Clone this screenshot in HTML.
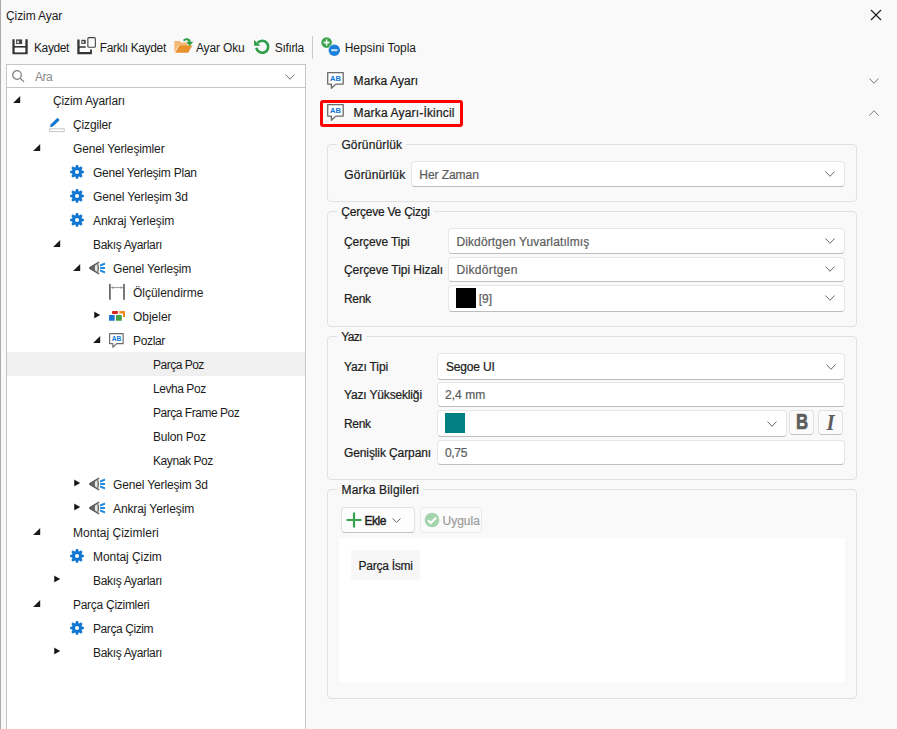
<!DOCTYPE html>
<html lang="tr"><head><meta charset="utf-8"><title>Çizim Ayar</title>
<style>
html,body{margin:0;padding:0}
body{width:897px;height:729px;position:relative;overflow:hidden;background:#f9f9f9;font-family:"Liberation Sans",sans-serif;font-size:12px;color:#1c1c1c}
.abs{position:absolute;display:block}
.t{position:absolute;white-space:nowrap;line-height:16px;height:16px}
.s{-webkit-text-stroke:0.22px currentColor}
.b{-webkit-text-stroke:0.4px currentColor}
.sel{position:absolute;left:7px;width:298px;height:24px;background:#f0f0f0}
.grp{position:absolute;border:1px solid #e1e1e1;border-radius:4px;box-sizing:border-box;background:#f9f9f9}
.gt{position:absolute;background:#f9f9f9;height:14px}
.cb{position:absolute;box-sizing:border-box;background:#fff;border:1px solid #e6e6e6;border-bottom-color:#bdbdbd;border-radius:4px}
.btn{position:absolute;box-sizing:border-box;background:#fdfdfd;border:1px solid #e0e0e0;border-bottom-color:#c4c4c4;border-radius:4px}
</style></head>
<body>
<div class="abs" style="left:0;top:0;width:1px;height:729px;background:#ababab"></div>
<svg class="abs" style="left:870px;top:9px" width="12" height="12" viewBox="0 0 12 12"><path d="M1 1l10 10M11 1L1 11" stroke="#1a1a1a" stroke-width="1.1"/></svg>
<svg class="abs" style="left:12px;top:39px" width="16" height="16" viewBox="0 0 16 16"><rect x="0" y="0" width="16" height="15.6" fill="#fff" opacity=".7"/><path d="M0.4 0.3h2.4v6.7h10.4V0.3h2.5v14.9H0.4zM2.8 8.8v4.4h10.4V8.8z" fill="#333" fill-rule="evenodd"/><rect x="2.8" y="8.8" width="10.4" height="4.4" fill="#fff"/><rect x="2.8" y="0.3" width="10.4" height="6.7" fill="#fff"/><rect x="4.1" y="0.4" width="6.1" height="4.7" fill="#444"/><rect x="5.1" y="1.8" width="1.9" height="2.4" fill="#ddd"/></svg>
<svg class="abs" style="left:77px;top:37px" width="20" height="18" viewBox="0 0 20 18"><rect x="0" y="2.2" width="15.3" height="15.3" fill="#fff" opacity=".7"/><path d="M0.3 2.6h2.3v6.6h6.1v1.5H2.6v4.4h10.5v-2.6h1.8v4.7H0.3z" fill="#333"/><rect x="4.3" y="2.8" width="4.4" height="4.1" fill="#444"/><rect x="5.2" y="4.1" width="1.7" height="1.9" fill="#ddd"/><rect x="10.85" y="0.65" width="7.5" height="9.6" rx="1" fill="#fbfbfb" stroke="#444" stroke-width="1.1"/></svg>
<svg class="abs" style="left:174px;top:37px" width="20" height="17" viewBox="0 0 20 17"><path d="M0.3 4h5.6l1.4 1.6h6.3V15H0.3z" fill="#f2b876"/><path d="M5 8.3l-4.2 7.3" stroke="#fdf3e6" stroke-width="1"/><path d="M5.4 8.4h13l-4.3 7.3H1.2z" fill="#e8912d"/><path d="M9.6 3.6C11.6 1.4 15.6 1.8 15.7 5.4" fill="none" stroke="#2e9e48" stroke-width="2"/><path d="M12.3 4.8h6.9l-3.5 4.1z" fill="#2e9e48"/></svg>
<svg class="abs" style="left:254px;top:39px" width="17" height="16" viewBox="0 0 17 16"><path d="M3.6 3.9A6 6 0 1 1 2.3 8.7" fill="none" stroke="#2e9e48" stroke-width="2.6"/><path d="M0.1 0.9v5.8h6.4z" fill="#2e9e48"/></svg>
<div class="abs" style="left:312px;top:36px;width:1px;height:23px;background:#c9c9c9"></div>
<svg class="abs" style="left:321px;top:37px" width="20" height="20" viewBox="0 0 20 20"><circle cx="5.6" cy="5.6" r="5.3" fill="#3da44d"/><path d="M2.6 5.6h6M5.6 2.6v6" stroke="#fff" stroke-width="1.5"/><circle cx="13.3" cy="13.2" r="6.2" fill="#f9f9f9"/><circle cx="13.3" cy="13.2" r="5.7" fill="#1b7fdc"/><path d="M10.2 13.2h6.2" stroke="#d8e9fb" stroke-width="1.9"/></svg>
<div class="abs" style="left:6px;top:64px;width:300px;height:680px;box-sizing:border-box;border:1px solid #c6c6c6;background:#fff"></div>
<div class="abs" style="left:6px;top:87px;width:300px;height:1px;background:#c6c6c6"></div>
<svg class="abs" style="left:12px;top:70px" width="13" height="13" viewBox="0 0 13 13"><circle cx="5" cy="5" r="4.3" fill="none" stroke="#7c7c7c" stroke-width="1.2"/><path d="M8.2 8.2l3.8 3.7" stroke="#7c7c7c" stroke-width="1.2"/></svg>
<svg class="abs" style="left:285px;top:74px" width="10" height="6" viewBox="0 0 10 6"><path d="M0.5 0.5L5.0 5.3L9.5 0.5" fill="none" stroke="#6e6e6e" stroke-width="1"/></svg>
<svg class="abs" style="left:13px;top:96px" width="8" height="8" viewBox="0 0 8 8"><path d="M7.2 0V7.1H0.1Z" fill="#1a1a1a"/></svg>
<svg class="abs" style="left:49px;top:117px;overflow:visible" width="16" height="16" viewBox="0 0 16 16"><g><rect x="0.6" y="11.8" width="14.6" height="2.8" fill="#fff" stroke="#c6c6c6"/><path d="M0.9 10.3l0.9-3.1 6.2-6q.5-.4 1 0l1.2 1.2q.4.5 0 1l-6.2 6z" fill="#1276d3"/></g></svg>
<svg class="abs" style="left:33px;top:144px" width="8" height="8" viewBox="0 0 8 8"><path d="M7.2 0V7.1H0.1Z" fill="#1a1a1a"/></svg>
<svg class="abs" style="left:69px;top:165px;overflow:visible" width="16" height="16" viewBox="0 0 16 16"><g transform="translate(0,-0.5)"><path fill="#1276d3" d="M6.9 0.6h2.2l.35 1.9 1.05.43 1.6-1.1 1.55 1.55-1.1 1.6.43 1.05 1.9.35v2.2l-1.9.35-.43 1.05 1.1 1.6-1.55 1.55-1.6-1.1-1.05.43-.35 1.9H6.9l-.35-1.9-1.05-.43-1.6 1.1-1.55-1.55 1.1-1.6-.43-1.05-1.9-.35V6.4l1.9-.35.43-1.05-1.1-1.6L3.9 1.85l1.6 1.1 1.05-.43z"/><circle cx="8" cy="7.5" r="2" fill="#fff"/></g></svg>
<svg class="abs" style="left:69px;top:189px;overflow:visible" width="16" height="16" viewBox="0 0 16 16"><g transform="translate(0,-0.5)"><path fill="#1276d3" d="M6.9 0.6h2.2l.35 1.9 1.05.43 1.6-1.1 1.55 1.55-1.1 1.6.43 1.05 1.9.35v2.2l-1.9.35-.43 1.05 1.1 1.6-1.55 1.55-1.6-1.1-1.05.43-.35 1.9H6.9l-.35-1.9-1.05-.43-1.6 1.1-1.55-1.55 1.1-1.6-.43-1.05-1.9-.35V6.4l1.9-.35.43-1.05-1.1-1.6L3.9 1.85l1.6 1.1 1.05-.43z"/><circle cx="8" cy="7.5" r="2" fill="#fff"/></g></svg>
<svg class="abs" style="left:69px;top:213px;overflow:visible" width="16" height="16" viewBox="0 0 16 16"><g transform="translate(0,-0.5)"><path fill="#1276d3" d="M6.9 0.6h2.2l.35 1.9 1.05.43 1.6-1.1 1.55 1.55-1.1 1.6.43 1.05 1.9.35v2.2l-1.9.35-.43 1.05 1.1 1.6-1.55 1.55-1.6-1.1-1.05.43-.35 1.9H6.9l-.35-1.9-1.05-.43-1.6 1.1-1.55-1.55 1.1-1.6-.43-1.05-1.9-.35V6.4l1.9-.35.43-1.05-1.1-1.6L3.9 1.85l1.6 1.1 1.05-.43z"/><circle cx="8" cy="7.5" r="2" fill="#fff"/></g></svg>
<svg class="abs" style="left:53px;top:240px" width="8" height="8" viewBox="0 0 8 8"><path d="M7.2 0V7.1H0.1Z" fill="#1a1a1a"/></svg>
<svg class="abs" style="left:73px;top:264px" width="8" height="8" viewBox="0 0 8 8"><path d="M7.2 0V7.1H0.1Z" fill="#1a1a1a"/></svg>
<svg class="abs" style="left:89px;top:261px;overflow:visible" width="16" height="16" viewBox="0 0 16 16"><g><path d="M0.4 7L6.2 3.5V10.5Z" fill="#666"/><ellipse cx="7.5" cy="7" rx="1.6" ry="3.3" fill="#e6e6e6"/><path d="M8.7 3.2Q10.2 7 8.7 10.8" fill="none" stroke="#5c5c5c" stroke-width="1.3"/><path d="M0.4 7L10.2 1.1M0.4 7L10.2 12.9" stroke="#5c5c5c" stroke-width="1.5" fill="none"/><path d="M11 4.6l5-2.1M11.2 7h4.8M11 9.4l5 2.1" stroke="#1e88e5" stroke-width="1.9" fill="none"/></g></svg>
<svg class="abs" style="left:109px;top:285px;overflow:visible" width="16" height="16" viewBox="0 0 16 16"><g><path d="M0.9 -1v15.8M15 -1v15.8" stroke="#6a6a6a" stroke-width="1.8"/><path d="M2.4 2.6h11.2" stroke="#8c8c8c" stroke-width="0.9"/><path d="M2 2.6l2.3-1.4v2.8zM14 2.6l-2.3-1.4v2.8z" fill="#8c8c8c"/></g></svg>
<svg class="abs" style="left:94px;top:311.4px" width="7" height="9" viewBox="0 0 7 9"><path d="M0.4 0.9L5.8 4L0.4 7.1Z" fill="#111" stroke="#111" stroke-width=".4" stroke-linejoin="round"/></svg>
<svg class="abs" style="left:109px;top:309px;overflow:visible" width="16" height="16" viewBox="0 0 16 16"><g><rect x="3" y="2.1" width="5.9" height="2.8" rx=".7" fill="#d6241f"/><path d="M10.3 2.1h5.1q.6 0 .6.6v5.2h-2V4.5h-3.7z" fill="#ef8a1d"/><rect x="0" y="6" width="5.7" height="5.8" rx=".5" fill="#1976d2"/><rect x="7" y="6" width="5.8" height="5.8" rx=".5" fill="#43a047"/></g></svg>
<svg class="abs" style="left:93px;top:336px" width="8" height="8" viewBox="0 0 8 8"><path d="M7.2 0V7.1H0.1Z" fill="#1a1a1a"/></svg>
<svg class="abs" style="left:109px;top:333px;overflow:visible" width="16" height="16" viewBox="0 0 18.3 18.3"><g><path d="M0.7 0.7H16.2V12.1H8.8L4.4 16.3V12.1H0.7Z" fill="#fff" stroke="#6a6a6a" stroke-width="1.3" stroke-linejoin="round"/><text x="8.6" y="9.1" font-family="Liberation Sans,sans-serif" font-weight="bold" font-size="7.6" text-anchor="middle" fill="#1276d3">AB</text></g></svg>
<div class="sel" style="top:352px"></div>
<svg class="abs" style="left:74px;top:479.4px" width="7" height="9" viewBox="0 0 7 9"><path d="M0.4 0.9L5.8 4L0.4 7.1Z" fill="#111" stroke="#111" stroke-width=".4" stroke-linejoin="round"/></svg>
<svg class="abs" style="left:89px;top:477px;overflow:visible" width="16" height="16" viewBox="0 0 16 16"><g><path d="M0.4 7L6.2 3.5V10.5Z" fill="#666"/><ellipse cx="7.5" cy="7" rx="1.6" ry="3.3" fill="#e6e6e6"/><path d="M8.7 3.2Q10.2 7 8.7 10.8" fill="none" stroke="#5c5c5c" stroke-width="1.3"/><path d="M0.4 7L10.2 1.1M0.4 7L10.2 12.9" stroke="#5c5c5c" stroke-width="1.5" fill="none"/><path d="M11 4.6l5-2.1M11.2 7h4.8M11 9.4l5 2.1" stroke="#1e88e5" stroke-width="1.9" fill="none"/></g></svg>
<svg class="abs" style="left:74px;top:503.4px" width="7" height="9" viewBox="0 0 7 9"><path d="M0.4 0.9L5.8 4L0.4 7.1Z" fill="#111" stroke="#111" stroke-width=".4" stroke-linejoin="round"/></svg>
<svg class="abs" style="left:89px;top:501px;overflow:visible" width="16" height="16" viewBox="0 0 16 16"><g><path d="M0.4 7L6.2 3.5V10.5Z" fill="#666"/><ellipse cx="7.5" cy="7" rx="1.6" ry="3.3" fill="#e6e6e6"/><path d="M8.7 3.2Q10.2 7 8.7 10.8" fill="none" stroke="#5c5c5c" stroke-width="1.3"/><path d="M0.4 7L10.2 1.1M0.4 7L10.2 12.9" stroke="#5c5c5c" stroke-width="1.5" fill="none"/><path d="M11 4.6l5-2.1M11.2 7h4.8M11 9.4l5 2.1" stroke="#1e88e5" stroke-width="1.9" fill="none"/></g></svg>
<svg class="abs" style="left:33px;top:528px" width="8" height="8" viewBox="0 0 8 8"><path d="M7.2 0V7.1H0.1Z" fill="#1a1a1a"/></svg>
<svg class="abs" style="left:69px;top:549px;overflow:visible" width="16" height="16" viewBox="0 0 16 16"><g transform="translate(0,-0.5)"><path fill="#1276d3" d="M6.9 0.6h2.2l.35 1.9 1.05.43 1.6-1.1 1.55 1.55-1.1 1.6.43 1.05 1.9.35v2.2l-1.9.35-.43 1.05 1.1 1.6-1.55 1.55-1.6-1.1-1.05.43-.35 1.9H6.9l-.35-1.9-1.05-.43-1.6 1.1-1.55-1.55 1.1-1.6-.43-1.05-1.9-.35V6.4l1.9-.35.43-1.05-1.1-1.6L3.9 1.85l1.6 1.1 1.05-.43z"/><circle cx="8" cy="7.5" r="2" fill="#fff"/></g></svg>
<svg class="abs" style="left:54px;top:575.4px" width="7" height="9" viewBox="0 0 7 9"><path d="M0.4 0.9L5.8 4L0.4 7.1Z" fill="#111" stroke="#111" stroke-width=".4" stroke-linejoin="round"/></svg>
<svg class="abs" style="left:33px;top:600px" width="8" height="8" viewBox="0 0 8 8"><path d="M7.2 0V7.1H0.1Z" fill="#1a1a1a"/></svg>
<svg class="abs" style="left:69px;top:621px;overflow:visible" width="16" height="16" viewBox="0 0 16 16"><g transform="translate(0,-0.5)"><path fill="#1276d3" d="M6.9 0.6h2.2l.35 1.9 1.05.43 1.6-1.1 1.55 1.55-1.1 1.6.43 1.05 1.9.35v2.2l-1.9.35-.43 1.05 1.1 1.6-1.55 1.55-1.6-1.1-1.05.43-.35 1.9H6.9l-.35-1.9-1.05-.43-1.6 1.1-1.55-1.55 1.1-1.6-.43-1.05-1.9-.35V6.4l1.9-.35.43-1.05-1.1-1.6L3.9 1.85l1.6 1.1 1.05-.43z"/><circle cx="8" cy="7.5" r="2" fill="#fff"/></g></svg>
<svg class="abs" style="left:54px;top:647.4px" width="7" height="9" viewBox="0 0 7 9"><path d="M0.4 0.9L5.8 4L0.4 7.1Z" fill="#111" stroke="#111" stroke-width=".4" stroke-linejoin="round"/></svg>
<svg class="abs" style="left:327px;top:72px" width="17" height="17" viewBox="0 0 17 17"><g><path d="M0.7 0.7H16.2V12.1H8.8L4.4 16.3V12.1H0.7Z" fill="#fff" stroke="#6a6a6a" stroke-width="1.3" stroke-linejoin="round"/><text x="8.6" y="9.1" font-family="Liberation Sans,sans-serif" font-weight="bold" font-size="7.6" text-anchor="middle" fill="#1276d3">AB</text></g></svg>
<svg class="abs" style="left:327px;top:104px" width="17" height="17" viewBox="0 0 17 17"><g><path d="M0.7 0.7H16.2V12.1H8.8L4.4 16.3V12.1H0.7Z" fill="#fff" stroke="#6a6a6a" stroke-width="1.3" stroke-linejoin="round"/><text x="8.6" y="9.1" font-family="Liberation Sans,sans-serif" font-weight="bold" font-size="7.6" text-anchor="middle" fill="#1276d3">AB</text></g></svg>
<div class="abs" style="left:320px;top:100px;width:143px;height:27px;box-sizing:border-box;border:3px solid #ff0000;border-radius:3px"></div>
<svg class="abs" style="left:868.5px;top:78px" width="10" height="6" viewBox="0 0 10 6"><path d="M0.5 0.5L5.0 5.3L9.5 0.5" fill="none" stroke="#7a7a7a" stroke-width="1"/></svg>
<svg class="abs" style="left:868.5px;top:110px" width="10" height="6" viewBox="0 0 10 6"><path d="M0.5 5.5L5.0 0.7L9.5 5.5" fill="none" stroke="#7a7a7a" stroke-width="1"/></svg>
<div class="grp" style="left:327px;top:144px;width:530px;height:58px"></div>
<div class="gt" style="left:337px;top:138px;width:69px"></div>
<div class="grp" style="left:327px;top:211px;width:530px;height:116px"></div>
<div class="gt" style="left:337px;top:205px;width:97px"></div>
<div class="grp" style="left:327px;top:336px;width:530px;height:144px"></div>
<div class="gt" style="left:337px;top:330px;width:29px"></div>
<div class="grp" style="left:327px;top:489px;width:530px;height:210px"></div>
<div class="gt" style="left:337px;top:483px;width:86px"></div>
<div class="cb" style="left:411px;top:161px;width:434px;height:26px"></div>
<svg class="abs" style="left:824.6px;top:170.6px" width="10" height="6" viewBox="0 0 10 6"><path d="M0.5 0.5L5.0 5.3L9.5 0.5" fill="none" stroke="#6a6a6a" stroke-width="1"/></svg>
<div class="cb" style="left:448px;top:228px;width:397px;height:26px"></div>
<svg class="abs" style="left:825px;top:238px" width="10" height="6" viewBox="0 0 10 6"><path d="M0.5 0.5L5.0 5.3L9.5 0.5" fill="none" stroke="#6a6a6a" stroke-width="1"/></svg>
<div class="cb" style="left:448px;top:257px;width:397px;height:25px"></div>
<svg class="abs" style="left:825px;top:266px" width="10" height="6" viewBox="0 0 10 6"><path d="M0.5 0.5L5.0 5.3L9.5 0.5" fill="none" stroke="#6a6a6a" stroke-width="1"/></svg>
<div class="cb" style="left:448px;top:285px;width:397px;height:27px"></div>
<svg class="abs" style="left:825px;top:295px" width="10" height="6" viewBox="0 0 10 6"><path d="M0.5 0.5L5.0 5.3L9.5 0.5" fill="none" stroke="#6a6a6a" stroke-width="1"/></svg>
<div class="abs" style="left:456px;top:288px;width:20px;height:20px;background:#000"></div>
<div class="cb" style="left:437px;top:353px;width:408px;height:27px"></div>
<svg class="abs" style="left:826px;top:364px" width="10" height="6" viewBox="0 0 10 6"><path d="M0.5 0.5L5.0 5.3L9.5 0.5" fill="none" stroke="#6a6a6a" stroke-width="1"/></svg>
<div class="cb" style="left:437px;top:382px;width:408px;height:25px"></div>
<div class="cb" style="left:437px;top:410px;width:350px;height:27px"></div>
<svg class="abs" style="left:767px;top:421px" width="10" height="6" viewBox="0 0 10 6"><path d="M0.5 0.5L5.0 5.3L9.5 0.5" fill="none" stroke="#6a6a6a" stroke-width="1"/></svg>
<div class="abs" style="left:445px;top:413px;width:20px;height:20px;background:#008080"></div>
<div class="btn" style="left:789px;top:410px;width:25px;height:25px;background:#fbfbfb"></div>
<div class="btn" style="left:818px;top:410px;width:25px;height:25px;background:#fbfbfb"></div>
<div class="t" style="left:793.5px;top:410.3px;width:16px;text-align:center;font:bold 21.5px/25px 'Liberation Sans',sans-serif;color:#5e5e5e;height:25px;transform:scaleX(.78);-webkit-text-stroke:.7px #5e5e5e">B</div>
<div class="t" style="left:825.6px;top:409.9px;font:italic bold 23.2px/25px 'Liberation Serif',serif;color:#5e5e5e;height:25px;transform:scaleX(.9)">I</div>
<div class="cb" style="left:437px;top:440px;width:408px;height:25px"></div>
<div class="btn" style="left:341px;top:507px;width:74px;height:26px"></div>
<svg class="abs" style="left:346px;top:512px" width="16" height="16" viewBox="0 0 16 16"><path d="M1.3 8h13.4M8 1.3v13.4" stroke="#35a350" stroke-width="2.2" stroke-linecap="round"/></svg>
<svg class="abs" style="left:392px;top:518px" width="9" height="5" viewBox="0 0 9 5"><path d="M0.5 0.5L4.5 4.3L8.5 0.5" fill="none" stroke="#6a6a6a" stroke-width="1"/></svg>
<div class="btn" style="left:420px;top:507px;width:62px;height:26px;background:#fbfbfb;border-color:#ebebeb"></div>
<svg class="abs" style="left:424px;top:512px" width="16" height="16" viewBox="0 0 16 16"><circle cx="8" cy="8" r="7.3" fill="#a5d3ad"/><path d="M4 8.3l2.8 2.8 5.2-5.4" fill="none" stroke="#fff" stroke-width="2.1"/></svg>
<div class="abs" style="left:339px;top:538px;width:506px;height:144px;background:#fff"></div>
<div class="abs" style="left:351px;top:550px;width:69px;height:30px;background:#f7f7f7"></div>
<span class="t r" style="left:6px;top:7.8px;letter-spacing:-0.092px;">Çizim Ayar</span>
<span class="t r" style="left:34px;top:39.5px;letter-spacing:-0.393px;">Kaydet</span>
<span class="t r" style="left:99.8px;top:39.5px;letter-spacing:-0.354px;">Farklı Kaydet</span>
<span class="t r" style="left:196px;top:39.5px;letter-spacing:-0.164px;">Ayar Oku</span>
<span class="t r" style="left:274.8px;top:39.5px;letter-spacing:-0.335px;">Sıfırla</span>
<span class="t r" style="left:344.7px;top:39.5px;letter-spacing:-0.041px;">Hepsini Topla</span>
<span class="t r" style="left:35px;top:68.9px;color:#8a8a8a;letter-spacing:-0.562px;">Ara</span>
<span class="t r" style="left:53px;top:92.5px;letter-spacing:-0.128px;">Çizim Ayarları</span>
<span class="t r" style="left:73px;top:116.5px;letter-spacing:-0.152px;">Çizgiler</span>
<span class="t r" style="left:73px;top:140.5px;letter-spacing:-0.151px;">Genel Yerleşimler</span>
<span class="t r" style="left:93px;top:164.5px;letter-spacing:-0.225px;">Genel Yerleşim Plan</span>
<span class="t r" style="left:93px;top:188.5px;letter-spacing:-0.147px;">Genel Yerleşim 3d</span>
<span class="t r" style="left:93px;top:212.5px;letter-spacing:-0.108px;">Ankraj Yerleşim</span>
<span class="t r" style="left:93px;top:236.5px;letter-spacing:-0.337px;">Bakış Ayarları</span>
<span class="t r" style="left:113px;top:260.5px;letter-spacing:-0.194px;">Genel Yerleşim</span>
<span class="t r" style="left:133px;top:284.5px;letter-spacing:-0.025px;">Ölçülendirme</span>
<span class="t r" style="left:133px;top:308.5px;letter-spacing:-0.027px;">Objeler</span>
<span class="t r" style="left:133px;top:332.5px;letter-spacing:-0.336px;">Pozlar</span>
<span class="t r" style="left:153px;top:356.5px;letter-spacing:-0.507px;">Parça Poz</span>
<span class="t r" style="left:153px;top:380.5px;letter-spacing:-0.447px;">Levha Poz</span>
<span class="t r" style="left:153px;top:404.5px;letter-spacing:-0.472px;">Parça Frame Poz</span>
<span class="t r" style="left:153px;top:428.5px;letter-spacing:-0.223px;">Bulon Poz</span>
<span class="t r" style="left:153px;top:452.5px;letter-spacing:-0.425px;">Kaynak Poz</span>
<span class="t r" style="left:113px;top:476.5px;letter-spacing:-0.147px;">Genel Yerleşim 3d</span>
<span class="t r" style="left:113px;top:500.5px;letter-spacing:-0.108px;">Ankraj Yerleşim</span>
<span class="t r" style="left:73px;top:524.5px;letter-spacing:0.015px;">Montaj Çizimleri</span>
<span class="t r" style="left:93px;top:548.5px;letter-spacing:-0.055px;">Montaj Çizim</span>
<span class="t r" style="left:93px;top:572.5px;letter-spacing:-0.337px;">Bakış Ayarları</span>
<span class="t r" style="left:73px;top:596.5px;letter-spacing:-0.279px;">Parça Çizimleri</span>
<span class="t r" style="left:93px;top:620.5px;letter-spacing:-0.417px;">Parça Çizim</span>
<span class="t r" style="left:93px;top:644.5px;letter-spacing:-0.337px;">Bakış Ayarları</span>
<span class="t s" style="left:353.6px;top:72.9px;letter-spacing:0.072px;">Marka Ayarı</span>
<span class="t s" style="left:353.6px;top:104.9px;letter-spacing:0.168px;">Marka Ayarı-İkincil</span>
<span class="t s" style="left:341.4px;top:136.9px;background:#f9f9f9;letter-spacing:0.142px;">Görünürlük</span>
<span class="t s" style="left:341.3px;top:203.9px;letter-spacing:-0.228px;">Çerçeve Ve Çizgi</span>
<span class="t s" style="left:341.3px;top:328.9px;letter-spacing:-0.681px;">Yazı</span>
<span class="t s" style="left:341.5px;top:481.9px;letter-spacing:0.156px;">Marka Bilgileri</span>
<span class="t s" style="left:344.3px;top:166.9px;letter-spacing:0.163px;">Görünürlük</span>
<span class="t s" style="left:419.3px;top:166.9px;color:#5c5c5c;letter-spacing:-0.059px;">Her Zaman</span>
<span class="t s" style="left:344px;top:234.0px;letter-spacing:-0.092px;">Çerçeve Tipi</span>
<span class="t s" style="left:456.4px;top:234.0px;color:#5c5c5c;letter-spacing:0.132px;">Dikdörtgen Yuvarlatılmış</span>
<span class="t s" style="left:344px;top:262.0px;letter-spacing:-0.054px;">Çerçeve Tipi Hizalı</span>
<span class="t s" style="left:456.4px;top:262.0px;color:#5c5c5c;letter-spacing:0.347px;">Dikdörtgen</span>
<span class="t s" style="left:344px;top:291.0px;letter-spacing:-0.304px;">Renk</span>
<span class="t s" style="left:478.8px;top:291.0px;color:#5c5c5c;letter-spacing:-0.048px;">[9]</span>
<span class="t s" style="left:344px;top:359.0px;letter-spacing:-0.127px;">Yazı Tipi</span>
<span class="t s" style="left:446px;top:359.0px;letter-spacing:-0.181px;">Segoe UI</span>
<span class="t s" style="left:344px;top:387.0px;letter-spacing:-0.158px;">Yazı Yüksekliği</span>
<span class="t s" style="left:444.9px;top:387.0px;color:#5c5c5c;letter-spacing:0.081px;">2,4 mm</span>
<span class="t s" style="left:344px;top:415.9px;letter-spacing:-0.304px;">Renk</span>
<span class="t s" style="left:344px;top:445.0px;letter-spacing:-0.107px;">Genişlik Çarpanı</span>
<span class="t s" style="left:444.9px;top:445.0px;color:#5c5c5c;letter-spacing:-0.265px;">0,75</span>
<span class="t b" style="left:364.4px;top:512.9px;letter-spacing:-0.436px;">Ekle</span>
<span class="t s" style="left:442.5px;top:512.9px;color:#9d9d9d;letter-spacing:0.007px;">Uygula</span>
<span class="t s" style="left:358.5px;top:557.9px;letter-spacing:-0.239px;">Parça İsmi</span>
</body></html>
